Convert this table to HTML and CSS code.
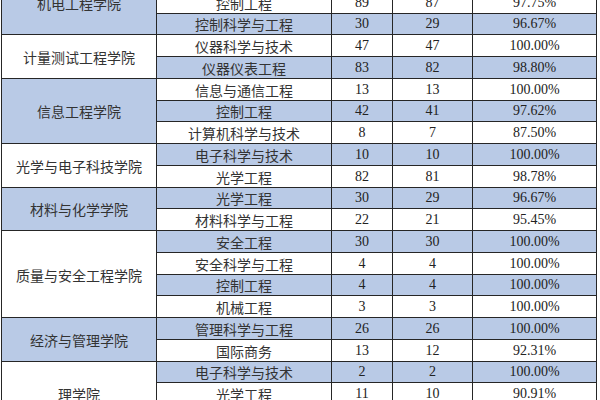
FILE: index.html
```html
<!DOCTYPE html>
<html lang="zh">
<head>
<meta charset="utf-8">
<link rel="stylesheet" href="styles.css">
</head>
<body>
<div class="frame">
<table class="grid">
<colgroup><col class="c1"><col class="c2"><col class="c3"><col class="c4"><col class="c5"></colgroup>
<tbody>
<tr class="blue"><td class="college blue" rowspan="3">机电工程学院</td><td class="major"></td><td></td><td></td><td></td></tr>
<tr><td class="major">控制工程</td><td class="num">89</td><td class="num">87</td><td class="num">97.75%</td></tr>
<tr class="blue"><td class="major">控制科学与工程</td><td class="num">30</td><td class="num">29</td><td class="num">96.67%</td></tr>

<tr><td class="college" rowspan="2">计量测试工程学院</td><td class="major">仪器科学与技术</td><td class="num">47</td><td class="num">47</td><td class="num">100.00%</td></tr>
<tr class="blue"><td class="major">仪器仪表工程</td><td class="num">83</td><td class="num">82</td><td class="num">98.80%</td></tr>

<tr><td class="college blue" rowspan="3">信息工程学院</td><td class="major">信息与通信工程</td><td class="num">13</td><td class="num">13</td><td class="num">100.00%</td></tr>
<tr class="blue"><td class="major">控制工程</td><td class="num">42</td><td class="num">41</td><td class="num">97.62%</td></tr>
<tr><td class="major">计算机科学与技术</td><td class="num">8</td><td class="num">7</td><td class="num">87.50%</td></tr>

<tr class="blue"><td class="college white" rowspan="2">光学与电子科技学院</td><td class="major">电子科学与技术</td><td class="num">10</td><td class="num">10</td><td class="num">100.00%</td></tr>
<tr><td class="major">光学工程</td><td class="num">82</td><td class="num">81</td><td class="num">98.78%</td></tr>

<tr class="blue"><td class="college blue" rowspan="2">材料与化学学院</td><td class="major">光学工程</td><td class="num">30</td><td class="num">29</td><td class="num">96.67%</td></tr>
<tr><td class="major">材料科学与工程</td><td class="num">22</td><td class="num">21</td><td class="num">95.45%</td></tr>

<tr class="blue"><td class="college white" rowspan="4">质量与安全工程学院</td><td class="major">安全工程</td><td class="num">30</td><td class="num">30</td><td class="num">100.00%</td></tr>
<tr><td class="major">安全科学与工程</td><td class="num">4</td><td class="num">4</td><td class="num">100.00%</td></tr>
<tr class="blue"><td class="major">控制工程</td><td class="num">4</td><td class="num">4</td><td class="num">100.00%</td></tr>
<tr><td class="major">机械工程</td><td class="num">3</td><td class="num">3</td><td class="num">100.00%</td></tr>

<tr class="blue"><td class="college blue" rowspan="2">经济与管理学院</td><td class="major">管理科学与工程</td><td class="num">26</td><td class="num">26</td><td class="num">100.00%</td></tr>
<tr><td class="major">国际商务</td><td class="num">13</td><td class="num">12</td><td class="num">92.31%</td></tr>

<tr class="blue"><td class="college white" rowspan="3">理学院</td><td class="major">电子科学与技术</td><td class="num">2</td><td class="num">2</td><td class="num">100.00%</td></tr>
<tr><td class="major">光学工程</td><td class="num">11</td><td class="num">10</td><td class="num">90.91%</td></tr>
<tr class="blue"><td class="major"></td><td></td><td></td><td></td></tr>
</tbody>
</table>
</div>
</body>
</html>
```
FILE: styles.css
```css
html, body {
  margin: 0;
  padding: 0;
  background: #ffffff;
}
.frame {
  width: 600px;
  height: 400px;
  overflow: hidden;
  padding-left: 1px;
  box-sizing: border-box;
}
.grid {
  border-collapse: collapse;
  table-layout: fixed;
  width: 595px;
  margin-top: -31px;
  color: #2e2e2e;
}
.c1 { width: 155px; }
.c2 { width: 175px; }
.c3 { width: 61px; }
.c4 { width: 80px; }
.c5 { width: 124px; }
.grid tr { height: 21.76px; }
.grid td {
  border: 1px solid #262626;
  padding: 1px 0 0 0;
  text-align: center;
  vertical-align: middle;
  font-size: 14px;
  line-height: 16px;
  white-space: nowrap;
  overflow: hidden;
  background: #ffffff;
}
.grid tr.blue td { background: #b9cae6; }
.grid td.college {
  font-family: "Noto Sans CJK SC", "Noto Sans", sans-serif;
  color: #333333;
}
.grid tr td.college.blue { background: #b9cae6; }
.grid tr td.college.white { background: #ffffff; }
.major {
  font-family: "Noto Sans CJK SC", "Noto Sans", sans-serif;
  color: #333333;
}
.num {
  font-family: "Liberation Serif", "Times New Roman", serif;
  color: #222222;
}
```
